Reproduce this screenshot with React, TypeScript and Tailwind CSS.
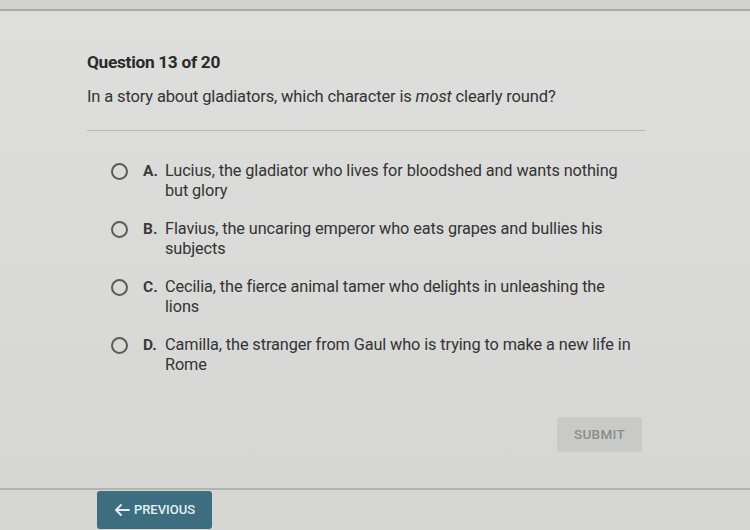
import React from "react";

const options = [
  { l: "A.", t1: "Lucius, the gladiator who lives for bloodshed and wants nothing", t2: "but glory" },
  { l: "B.", t1: "Flavius, the uncaring emperor who eats grapes and bullies his", t2: "subjects" },
  { l: "C.", t1: "Cecilia, the fierce animal tamer who delights in unleashing the", t2: "lions" },
  { l: "D.", t1: "Camilla, the stranger from Gaul who is trying to make a new life in", t2: "Rome" },
];

export default function App() {
  return (
    <div
      className="w-[750px] h-[530px] overflow-hidden flex flex-col bg-[#d9d9d7] text-[#2f2f2f]"
      style={{ fontFamily: "Roboto, 'Liberation Sans', sans-serif" }}
    >
      <div className="h-[11px] shrink-0 bg-[#d2d2d0] border-b-2 border-[#a8a8a6]" />
      <div className="flex-1 flex flex-col bg-gradient-to-b from-[#dededc] to-[#d6d6d4]">
        <div className="pl-[87px] pt-[39px]">
          <div className="text-[17.3px] font-bold leading-6 text-[#2a2a2a] tracking-[-0.3px]">Question 13 of 20</div>
          <div className="mt-[11px] text-[16.5px] leading-6 text-[#333] tracking-[-0.15px]">
            In a story about gladiators, which character is <i>most</i> clearly round?
          </div>
          <div className="mt-[21px] w-[558px] h-px bg-[#b9b9b7]" />
        </div>
        <div className="pl-[111px] pt-[30px] flex flex-col gap-[18px]">
          {options.map((o) => (
            <div key={o.l} className="flex items-start">
              <div className="w-[17px] h-[17px] mt-[2px] rounded-full border-2 border-[#5b5b5b] shrink-0" />
              <div className="ml-[15px] w-[22px] text-[15.5px] font-bold leading-5 text-[#3a3a3a]">{o.l}</div>
              <div className="text-[16.3px] leading-5 text-[#333] tracking-[-0.1px]">
                <div>{o.t1}</div>
                <div>{o.t2}</div>
              </div>
            </div>
          ))}
        </div>
        <div className="flex justify-end pr-[108px] mt-[42px]">
          <div className="w-[85px] h-[35px] rounded-[3px] bg-[#c9c9c7] flex items-center justify-center text-[13.5px] font-medium tracking-[0.3px] text-[#8c8c8a]">
            SUBMIT
          </div>
        </div>
        <div className="flex-1" />
      </div>
      <div className="h-[42px] shrink-0 border-t-2 border-[#b3b3b1] bg-[#d6d6d4] pl-[97px] pt-[1px]">
        <div className="w-[115px] h-[38px] rounded-[3px] bg-[#3c6e7f] flex items-center justify-center gap-[4px] text-[13px] font-medium text-[#e6eef0]">
          <svg width="16" height="14" viewBox="0 0 16 14" fill="none" stroke="#e6eef0" strokeWidth="1.8" strokeLinecap="round" strokeLinejoin="round">
            <path d="M15 7H2M7 2L2 7l5 5" />
          </svg>
          PREVIOUS
        </div>
      </div>
    </div>
  );
}
